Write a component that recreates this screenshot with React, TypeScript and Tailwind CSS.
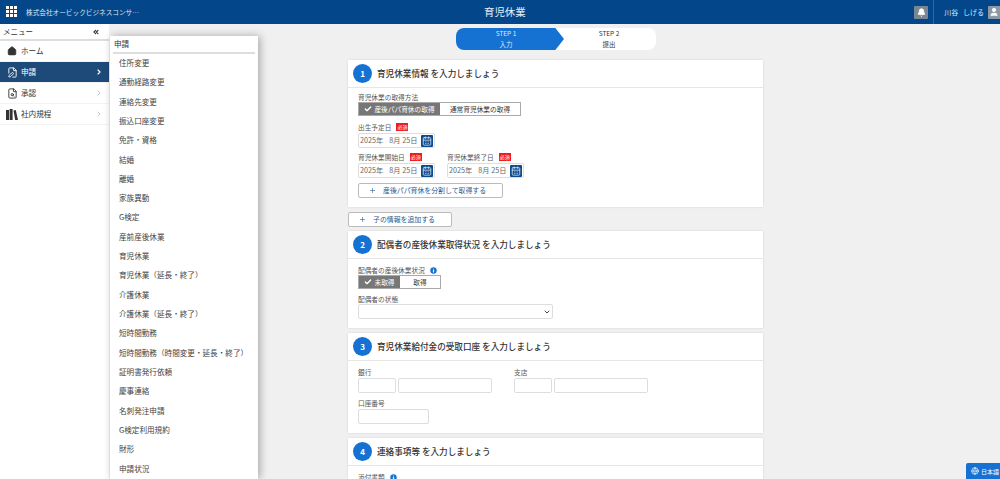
import { Bell, CalendarDays, Check, ChevronDown, ChevronRight, ChevronsLeft, Globe, Home, Info, FilePen, FileSearch, Plus, User } from 'lucide-react';

const submenu = [
  '住所変更', '通勤経路変更', '連絡先変更', '振込口座変更', '免許・資格', '結婚', '離婚', '家族異動', 'G検定', '産前産後休業',
  '育児休業', '育児休業（延長・終了）', '介護休業', '介護休業（延長・終了）', '短時間勤務', '短時間勤務（時間変更・延長・終了）',
  '証明書発行依頼', '慶事連絡', '名刺発注申請', 'G検定利用規約', '財形', '申請状況',
];

const font = "font-['Noto_Sans_CJK_JP','Noto_Sans',sans-serif]";

function Required() {
  return <span className="bg-[#f01c1c] text-white text-[5px] leading-[8px] px-[1px] ml-[5px] h-[8px] w-[12px] text-center">必須</span>;
}

function Label({ children }: { children: React.ReactNode }) {
  return <div className="flex items-center text-[6.7px] leading-[10px] text-[#555] whitespace-nowrap">{children}</div>;
}

function DateField() {
  return (
    <div className="flex items-center w-[77px] h-[15px] border border-[#ddd] rounded-[2px] bg-white text-[7.2px] text-[#666] pl-[1px]">
      <span className="flex-1 flex whitespace-nowrap">
        <span>2025年</span>
        <span className="ml-[6px]">8月</span>
        <span className="ml-[2px]">25日</span>
      </span>
      <span className="w-[12px] h-[12px] mr-[1px] bg-[#0c4a8c] rounded-[1px] flex items-center justify-center">
        <CalendarDays size={10} className="text-[#cfe0f0]" />
      </span>
    </div>
  );
}

function Toggle({ on, off, onWidth, offWidth }: { on: string; off: string; onWidth: string; offWidth: string }) {
  return (
    <div className="flex h-[14px] border border-[#aaa] text-[6.7px] leading-[12px] w-fit whitespace-nowrap">
      <div className={`${onWidth} bg-[#777] text-white flex items-center justify-center gap-[2px]`}>
        <Check size={8} strokeWidth={4} />
        {on}
      </div>
      <div className={`${offWidth} bg-white text-[#333] text-center`}>{off}</div>
    </div>
  );
}

function AddButton({ width, label }: { width: string; label: string }) {
  return (
    <div className={`${width} h-[15px] flex items-center border border-[#bbb] rounded-[2px] bg-white text-[#1f5a8f] text-[6.9px] whitespace-nowrap`}>
      <Plus size={7} className="ml-[10px]" />
      <span className="ml-[7px]">{label}</span>
    </div>
  );
}

function SectionHead({ num, title }: { num: number; title: string }) {
  return (
    <div className="h-[28px] flex items-center border-b border-[#e6e6e6] pl-[5px]">
      <span className="w-[19px] h-[19px] rounded-full bg-[#1572d3] text-white text-[8px] font-bold flex items-center justify-center">{num}</span>
      <span className="ml-[5px] text-[8.6px] font-medium text-[#333] whitespace-nowrap">{title}</span>
    </div>
  );
}

function Box({ width }: { width: string }) {
  return <div className={`${width} h-[15px] border border-[#ddd] rounded-[2px] bg-white`} />;
}

function SideItem({ icon, label, active, arrow }: { icon: React.ReactNode; label: string; active?: boolean; arrow?: boolean }) {
  return (
    <div className={`h-[21px] flex items-center pl-[6px] text-[7.6px] border-b border-[#f3f3f3] ${active ? 'bg-[#1e4a7a] text-white' : 'bg-white text-[#333]'}`}>
      <span className="w-[12px] flex justify-center">{icon}</span>
      <span className="ml-[3px] flex-1">{label}</span>
      {arrow && <ChevronRight size={8} strokeWidth={active ? 3.5 : 2} className={`mr-[6px] ${active ? 'text-white' : 'text-[#aaa]'}`} />}
    </div>
  );
}

function GridIcon() {
  return (
    <svg width="12" height="12" viewBox="0 0 12 12" fill="white" className="ml-[6px] shrink-0">
      {[0, 4, 8].map(y => [0, 4, 8].map(x => <rect key={`${x}-${y}`} x={x} y={y} width="3" height="3" />))}
    </svg>
  );
}

function BooksIcon() {
  return (
    <svg width="12" height="11" viewBox="0 0 12 11" fill="#333">
      <rect x="0" y="1" width="3" height="10" />
      <rect x="3.6" y="0" width="3" height="11" />
      <path d="M7.5 1.5 9.8 1 12 11H9.2Z" />
    </svg>
  );
}

export default function App() {
  return (
    <div className={`relative w-[1000px] h-[479px] overflow-hidden bg-[#f0f0f0] ${font}`}>
      {/* Header */}
      <header className="h-[24px] bg-[#03478a] flex items-center text-white relative">
        <GridIcon />
        <span className="ml-[8px] text-[6.65px] text-[#dbe6f0] whitespace-nowrap">株式会社オービックビジネスコンサ…</span>
        <span className="absolute left-[484px] text-[10.4px] text-[#e8eef5]">育児休業</span>
        <div className="ml-auto flex items-center h-full">
          <span className="w-[14px] h-[13px] bg-[#7a8692] rounded-[1px] flex items-center justify-center">
            <Bell size={9} fill="white" />
          </span>
          <span className="ml-[5px] h-full border-l border-[#33689c] pl-[10px] text-[7px] flex items-center text-[#dbe6f0] whitespace-pre">川谷   しげる</span>
          <span className="ml-[4px] w-[12px] h-[13px] bg-[#8b98a5] rounded-l-[1px] flex items-center justify-center">
            <User size={10} fill="white" />
          </span>
        </div>
      </header>

      <div className="flex h-[455px]">
        {/* Sidebar */}
        <aside className="w-[109px] h-full bg-white shrink-0">
          <div className="h-[17px] flex items-center justify-between px-[3px] text-[7.5px] text-[#333] border-b-2 border-[#ddd]">
            メニュー
            <ChevronsLeft size={8} strokeWidth={3.5} className="mr-[6px]" />
          </div>
          <SideItem icon={<Home size={10} fill="#333" />} label="ホーム" />
          <SideItem icon={<FilePen size={11} />} label="申請" active arrow />
          <SideItem icon={<FileSearch size={11} />} label="承認" arrow />
          <SideItem icon={<BooksIcon />} label="社内規程" arrow />
        </aside>

        {/* Main */}
        <main className="flex-1 pl-[239px] pt-[4px]">
          <div className="w-[415px]">
            <div className="ml-[108px] w-[200px] h-[22px] flex bg-white rounded-[8px] text-[6.5px] leading-[11px] text-center text-[#333]">
              <div className="w-[108px] bg-[#1572d3] text-[#dbeafc] rounded-l-[8px] [clip-path:polygon(0_0,92%_0,100%_50%,92%_100%,0_100%)] pr-[8px]">
                <div>STEP 1</div>
                <div>入力</div>
              </div>
              <div className="flex-1 pr-[2px]">
                <div>STEP 2</div>
                <div>提出</div>
              </div>
            </div>

            <section className="mt-[10px] h-[147px] bg-white shadow-[0_0_2px_rgba(0,0,0,0.12)]">
              <SectionHead num={1} title="育児休業情報 を入力しましょう" />
              <div className="pl-[10px] pt-[4px]">
                <Label>育児休業の取得方法</Label>
                <Toggle on="産後パパ育休の取得" off="通常育児休業の取得" onWidth="w-[81px]" offWidth="w-[80px]" />
                <div className="mt-[6px]"><Label>出生予定日<Required /></Label></div>
                <div className="mt-[1px]"><DateField /></div>
                <div className="mt-[4px] flex gap-[12px]">
                  <div>
                    <Label>育児休業開始日<Required /></Label>
                    <div className="mt-[1px]"><DateField /></div>
                  </div>
                  <div>
                    <Label>育児休業終了日<Required /></Label>
                    <div className="mt-[1px]"><DateField /></div>
                  </div>
                </div>
                <div className="mt-[5px]"><AddButton width="w-[145px]" label="産後パパ育休を分割して取得する" /></div>
              </div>
            </section>

            <div className="mt-[5px]"><AddButton width="w-[104px]" label="子の情報を追加する" /></div>

            <section className="mt-[4px] h-[97px] bg-white shadow-[0_0_2px_rgba(0,0,0,0.12)]">
              <SectionHead num={2} title="配偶者の産後休業取得状況 を入力しましょう" />
              <div className="pl-[10px] pt-[6px]">
                <Label>
                  配偶者の産後休業状況
                  <Info size={9} fill="#1572d3" strokeWidth={3} className="ml-[4px] text-white" />
                </Label>
                <Toggle on="未取得" off="取得" onWidth="w-[41px]" offWidth="w-[40px]" />
                <div className="mt-[5px]"><Label>配偶者の状態</Label></div>
                <div className="w-[195px] h-[15px] border border-[#ddd] rounded-[2px] flex items-center justify-end pr-[1px]">
                  <ChevronDown size={8} strokeWidth={3} className="text-[#444]" />
                </div>
              </div>
            </section>

            <section className="mt-[5px] h-[100px] bg-white shadow-[0_0_2px_rgba(0,0,0,0.12)]">
              <SectionHead num={3} title="育児休業給付金の受取口座 を入力しましょう" />
              <div className="pl-[10px] pt-[6px]">
                <div className="flex gap-[22px]">
                  <div>
                    <Label>銀行</Label>
                    <div className="mt-[1px] flex gap-[2px]"><Box width="w-[38px]" /><Box width="w-[94px]" /></div>
                  </div>
                  <div>
                    <Label>支店</Label>
                    <div className="mt-[1px] flex gap-[2px]"><Box width="w-[38px]" /><Box width="w-[94px]" /></div>
                  </div>
                </div>
                <div className="mt-[5px]"><Label>口座番号</Label></div>
                <div className="mt-[1px]"><Box width="w-[71px]" /></div>
              </div>
            </section>

            <section className="mt-[5px] h-[60px] bg-white shadow-[0_0_2px_rgba(0,0,0,0.12)]">
              <SectionHead num={4} title="連絡事項等 を入力しましょう" />
              <div className="pl-[10px] pt-[6px]">
                <Label>
                  添付書類
                  <Info size={9} fill="#1572d3" strokeWidth={3} className="ml-[4px] text-white" />
                </Label>
              </div>
            </section>
          </div>
        </main>
      </div>

      {/* Flyout submenu */}
      <div className="absolute left-[110px] top-[36px] w-[148px] h-[443px] bg-white shadow-[2px_0_8px_rgba(0,0,0,0.3)] px-[3px]">
        <div className="h-[18px] flex items-center text-[7.6px] text-[#333] border-b-2 border-[#ddd] pl-[1px]">申請</div>
        <div className="pl-[6px] -mt-[1px]">
          {submenu.map(item => (
            <div key={item} className="h-[19.32px] flex items-center text-[7.6px] text-[#444] whitespace-nowrap">{item}</div>
          ))}
        </div>
      </div>

      {/* Language badge */}
      <div className="absolute right-0 bottom-0 w-[34px] h-[16px] bg-[#1572d3] rounded-tl-[2px] flex items-center pl-[5px] gap-[2px] text-white text-[6px] whitespace-nowrap">
        <Globe size={8} />
        日本語
      </div>
    </div>
  );
}
